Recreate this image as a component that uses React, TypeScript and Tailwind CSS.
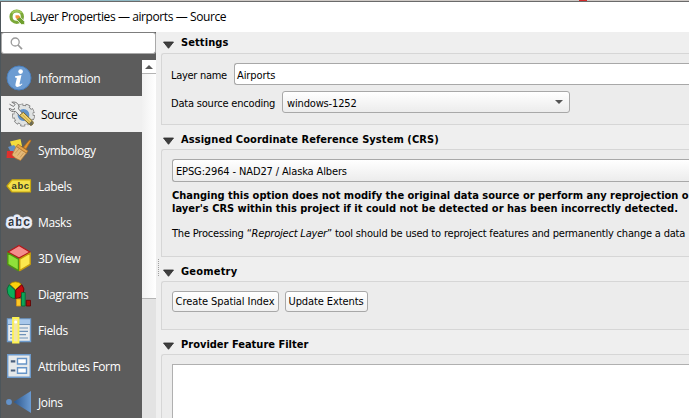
import type { ReactNode } from 'react';

const ui = "font-['DejaVu_Sans_Condensed','DejaVu_Sans',sans-serif] [font-stretch:condensed] text-[11px]";
const segoe = "font-['Open_Sans','Noto_Sans',sans-serif] [font-stretch:normal]";

function QgisLogo() {
  return (
    <svg width="16" height="16" viewBox="0 0 16 16" className="shrink-0">
      <circle cx="7.7" cy="7.7" r="5.7" fill="none" stroke="#7ba838" strokeWidth="3.2" />
      <path d="M3 4.2A5.8 5.8 0 0 1 12.4 4" fill="none" stroke="#a3c95a" strokeWidth="2" />
      <path d="M7.6 7.4h3L15.6 12.6V15.5H12.4L7.6 10.6Z" fill="#6f9f2e" stroke="#fff" strokeWidth=".7" />
      <path d="M6.5 6.3h3.2l1.6 1.7-3 2.2-1.8-1.6Z" fill="#f0943e" />
    </svg>
  );
}

function InfoIcon() {
  return (
    <svg width="26" height="26" viewBox="0 0 26 26">
      <circle cx="13" cy="13" r="12" fill="#6c9cd2" stroke="#4a7fbd" strokeWidth="1" />
      <circle cx="14.600" cy="6.600" r="2.300" fill="#fff" />
      <path d="M9 11.200 15.500 10.100 13.600 18.400q-.2 1.200.6 1 .8-.2 1.600-1l.7.6q-2.300 2.900-4.900 2.900-2.700-.1-2.100-2.900l1.300-5.800q.1-.8-1.800-.8Z" fill="#fff" />
    </svg>
  );
}

function SourceIcon() {
  return (
    <svg width="28" height="26" viewBox="0 0 28 26">
      <circle cx="16.500" cy="14" r="9.400" fill="none" stroke="#777" strokeWidth="4" strokeDasharray="4.400 2.160" />
      <circle cx="16.500" cy="14" r="8" fill="#5f91c9" stroke="#777" strokeWidth="4" />
      <circle cx="16.500" cy="14" r="7.600" fill="#5f91c9" stroke="#dfe2e2" strokeWidth="3.400" />
      <circle cx="16.500" cy="14" r="9.500" fill="none" stroke="#e2e4e4" strokeWidth="2.400" strokeDasharray="3.200 3.430" strokeDashoffset="-.6" />
      <path d="M2.500 3.200 6.500 5.500 8.200 3.200 4.800 1.200Q9.500.3 11.600 4q.8 2-.2 3.800l4.900 5.500-2.700 2.500-5-5.400Q4 11.500 2 7.800L3 7.500l3 1.600 2-1.500" fill="#eceeee" stroke="#777" strokeWidth="1" />
      <path d="M12.600 14.500 16.300 11.300 26 20.600q1 3-2.200 3.800Z" fill="#ecd06c" stroke="#7b6526" strokeWidth="1" />
      <path d="m15.600 13.900 8.500 8.500" stroke="#c9a544" strokeWidth="1" />
      <path d="M25.500 20.400q1.600 3.200-2.200 4.200l-1.200-1.500 2.300-3Z" fill="#6b6a55" />
    </svg>
  );
}

function SymbologyIcon() {
  return (
    <svg width="26" height="22" viewBox="0 0 26 22">
      <path d="M4 2.500 14.500 0 16 7 7 10Z" fill="#f4dc3c" />
      <path d="M2 8 8 6l7 8-8 3Z" fill="#6391c4" />
      <path d="m1 12 6 0 5 7-11.500 0Z" fill="#e02f2c" />
      <path d="m17.500 8.200 5.600-6.800q1.500-1.200 1.800.4l-5 8.300Z" fill="#e5952f" stroke="#b46c1a" strokeWidth=".7" />
      <path d="m12 5.200 10 6.800-1.700 2.200-10.100-6.700Z" fill="#e6a54c" stroke="#a8691d" strokeWidth=".7" />
      <path d="m10.200 7.500 10.100 6.700-5.800 7.300q-5-1.300-8.500-5.500Z" fill="#e3b878" stroke="#b57a30" strokeWidth=".7" />
      <path d="m11.500 16.500 4-5M14 18.500l3.500-4.500M9 14.500l4-4.500" stroke="#c4924e" strokeWidth=".8" />
    </svg>
  );
}

function LabelsIcon() {
  return (
    <svg width="26" height="14" viewBox="0 0 26 14">
      <path d="M1 7 6 .8H24.500V13H6Z" fill="#f4e049" stroke="#c9a70c" strokeWidth="1.200" strokeLinejoin="round" />
      <text x="5.600" y="10.100" fontFamily="Liberation Sans, sans-serif" fontWeight="bold" fontSize="9.500" textLength="17" fill="#333a2a">abc</text>
    </svg>
  );
}

function MasksIcon() {
  return (
    <svg width="28" height="16" viewBox="0 0 28 16">
      <text x="3" y="12.200" fontFamily="Liberation Sans, sans-serif" fontWeight="bold" fontSize="12" textLength="21.500" fill="#30363f" stroke="#e8ecf8" strokeWidth="5" strokeLinejoin="round" paintOrder="stroke">abc</text>
    </svg>
  );
}

function CubeIcon() {
  return (
    <svg width="26" height="28" viewBox="0 0 26 28">
      <path d="M13 1.500 24 8 13 14.200 2 8Z" fill="#f48d8c" stroke="#b5181b" strokeWidth="1.400" strokeLinejoin="round" />
      <path d="M1.800 9 12.500 15.200V26.600L1.800 20.300Z" fill="#8fe13a" stroke="#4f9413" strokeWidth="1.400" strokeLinejoin="round" />
      <path d="M24.200 9 13.700 15.200V26.600L24.200 20.300Z" fill="#fce84e" stroke="#c79d0a" strokeWidth="1.400" strokeLinejoin="round" />
    </svg>
  );
}

function DiagramsIcon() {
  return (
    <svg width="26" height="26" viewBox="0 0 26 26">
      <path d="M9.500 8.500 3.600 3.200A8.400 8.400 0 0 1 15.400 3.200Z" fill="#fbd20c" stroke="#9b7900" strokeWidth=".8" />
      <path d="M9 9.200 3.200 3.700A8.300 8.300 0 0 0 9 17.500Z" fill="#0cae5b" stroke="#056331" strokeWidth=".9" />
      <path d="M9.700 9.200 15.800 3.700A8.300 8.300 0 0 1 9.700 17.500Z" fill="#c60b0e" stroke="#6b0000" strokeWidth=".9" />
      <path d="M10.500 18h4v7h-4Z" fill="#fcc726" stroke="#d99411" strokeWidth=".8" />
      <path d="M15.500 11.500h3.700V25h-3.700Z" fill="#0ca558" stroke="#056331" strokeWidth=".8" />
      <path d="M20.300 19.300h4.200V25h-4.200Z" fill="#a70e0a" stroke="#5f0000" strokeWidth=".8" />
    </svg>
  );
}

function FieldsIcon() {
  return (
    <svg width="26" height="28" viewBox="0 0 26 28">
      <path d="M1.500 3h23v22.500h-23Z" fill="#e9ecee" stroke="#6d9acb" strokeWidth="1.400" />
      <path d="M2 3.500h22v4.500H2Z" fill="#a8c8ec" />
      <path d="M2 8.500h22M4 12h18M4 15.300h18M4 18.600h16M4 22h18" stroke="#6f92b8" strokeWidth="1.200" />
      <path d="M7 2h5.500v24.500H7Z" fill="#f2e6a8" stroke="#fdf251" strokeWidth="1.800" />
      <circle cx="9.700" cy="6" r="1.500" fill="#fff" />
    </svg>
  );
}

function FormIcon() {
  return (
    <svg width="26" height="26" viewBox="0 0 26 26">
      <path d="M1.700 1.700h22.600v22.600H1.700Z" fill="#e6e9ea" stroke="#6d9acb" strokeWidth="1.400" />
      <path d="M11.500 5.500h9v5.500h-9ZM11.500 14.700h9v5.500h-9Z" fill="#fff" stroke="#6795c8" strokeWidth="1.400" />
      <path d="M4.800 8.300h4.500M4.800 17.500h4.500" stroke="#4b607d" strokeWidth="2.200" />
    </svg>
  );
}

function JoinsIcon() {
  return (
    <svg width="26" height="24" viewBox="0 0 26 24">
      <defs>
        <linearGradient id="join" x1="0" x2="1">
          <stop offset="0" stopColor="#2b568c" />
          <stop offset="1" stopColor="#6b9bd2" />
        </linearGradient>
      </defs>
      <circle cx="3" cy="12" r="2.900" fill="#6392c9" />
      <path d="M7.500 12 25 1V23Z" fill="url(#join)" />
    </svg>
  );
}

const items: { label: string; icon: ReactNode; selected?: boolean }[] = [
  { label: 'Information', icon: <InfoIcon /> },
  { label: 'Source', icon: <SourceIcon />, selected: true },
  { label: 'Symbology', icon: <SymbologyIcon /> },
  { label: 'Labels', icon: <LabelsIcon /> },
  { label: 'Masks', icon: <MasksIcon /> },
  { label: '3D View', icon: <CubeIcon /> },
  { label: 'Diagrams', icon: <DiagramsIcon /> },
  { label: 'Fields', icon: <FieldsIcon /> },
  { label: 'Attributes Form', icon: <FormIcon /> },
  { label: 'Joins', icon: <JoinsIcon /> },
];

function Section({ title, header, tracking = '', body, children }: { title: string; header: string; tracking?: string; body: string; children: ReactNode }) {
  return (
    <section className="flex shrink-0 flex-col">
      <div className={`flex items-center pl-[2px] ${header}`}>
        <svg width="11" height="8" viewBox="0 0 11 8" className="mt-[3px] shrink-0">
          <path d="M.5 1h10L5.500 7.300Z" fill="#3f3f3f" stroke="#2a2a2a" strokeWidth=".8" />
        </svg>
        <h2 className={`ml-[7px] font-bold leading-[14px] ${tracking}`}>{title}</h2>
      </div>
      <div className={`rounded-tl-[3px] border border-r-0 border-[#d6d6d6] bg-[#ececec] ${body}`}>{children}</div>
    </section>
  );
}

export default function App() {
  return (
    <div className={`flex h-[418px] w-[689px] flex-col overflow-hidden bg-[#efefef] text-black ${ui}`}>
      <div className="flex h-px shrink-0">
        <div className="w-[140px] bg-[#8fb9c4]" />
        <div className="w-[439px] bg-[#cfcac6]" />
        <div className="w-2 bg-[#d22a2a]" />
        <div className="flex-1 bg-[#cfcac6]" />
      </div>
      <div className="h-px shrink-0 bg-[#6a6a6a]" />
      <div className="flex min-h-0 flex-1">
        <div className="w-px shrink-0 bg-[#4d565b]" />
        <div className="flex min-w-0 flex-1 flex-col">
          <header className="flex h-[30px] shrink-0 items-center bg-white pl-2">
            <QgisLogo />
            <span className={`ml-[5px] whitespace-nowrap text-[12px] tracking-[-0.41px] ${segoe}`}>Layer Properties — airports — Source</span>
          </header>
          <div className="flex min-h-0 flex-1">
            <aside className="flex w-[155px] shrink-0 flex-col bg-[#5c5c5c]">
              <div className="flex h-[22px] shrink-0 items-center rounded-[3px] border border-[#a9a9a9] border-t-[#7d7d7d] bg-white pl-2">
                <svg width="13" height="13" viewBox="0 0 13 13" fill="none" stroke="#9a9a9a">
                  <circle cx="5.200" cy="5" r="4" strokeWidth="1.300" />
                  <path d="m8 8 4 4.200" strokeWidth="1.700" />
                </svg>
              </div>
              <div className="mt-[6px] flex min-h-0 flex-1">
                <nav className="flex-1 overflow-hidden">
                  {items.map((item) => (
                    <div key={item.label} className={`flex h-9 items-center pl-1 text-[12px] tracking-[-0.38px] ${segoe} ${item.selected ? 'bg-[#f0f0f0] text-black' : 'text-white'}`}>
                      <span className={item.selected ? 'flex w-9 justify-center pr-1' : 'flex w-[33px] justify-center pr-[5px]'}>{item.icon}</span>
                      <span className="whitespace-nowrap pt-px">{item.label}</span>
                    </div>
                  ))}
                </nav>
                <div className="flex w-[14px] flex-col bg-[#e3e3e3]">
                  <div className="flex h-[13px] items-center justify-center bg-white">
                    <svg width="8" height="4" viewBox="0 0 8 4"><path d="M0 4 4 0l4 4Z" fill="#5a5a5a" /></svg>
                  </div>
                  <div className="h-[226px] border-y border-[#b4b4b4] bg-linear-to-r from-[#f1f1f1] to-white" />
                </div>
              </div>
            </aside>
            <div className="w-[5px] shrink-0 pl-[2px] pt-[227px]">
              <div className="h-[17px] w-0 border-l border-dotted border-[#a0a0a0]" />
            </div>
            <main className="flex min-w-0 flex-1 flex-col">
              <Section title="Settings" header="h-[21px] pt-px" body="h-[72px] pl-[9px] pt-[9px]" tracking="tracking-[0.1px]">
                <div className="flex h-[22px] items-center">
                  <span className="w-[57px] pt-[4px] whitespace-nowrap tracking-[-0.3px]">Layer name</span>
                  <div className="ml-[6px] flex h-[22px] flex-1 items-center rounded-l-[3px] border border-r-0 border-[#a8a8a8] bg-white pl-[2px] pt-[4px] tracking-[-0.1px]">Airports</div>
                </div>
                <div className="mt-[6px] flex h-[22px] items-center">
                  <span className="w-[105px] pt-[4px] whitespace-nowrap tracking-[-0.2px]">Data source encoding</span>
                  <div className="ml-[6px] flex h-[22px] w-[288px] items-center justify-between rounded-[3px] border border-[#a8a8a8] bg-linear-to-b from-white to-[#ececec] pl-1 pr-[6px]">
                    <span className="pt-[4px] tracking-[-0.16px]">windows-1252</span>
                    <svg width="8" height="4" viewBox="0 0 8 4"><path d="M0 0h8L4 4Z" fill="#555" /></svg>
                  </div>
                </div>
              </Section>
              <Section title="Assigned Coordinate Reference System (CRS)" header="h-6 pt-[5px]" body="h-[108px] pl-[10px] pt-[9px]" tracking="tracking-[0.07px]">
                <div className="flex h-[23px] items-center rounded-l-[3px] border border-r-0 border-[#a8a8a8] bg-linear-to-b from-white to-[#ececec] pl-[3px] pt-[3px] tracking-[-0.13px]">
                  EPSG:2964 - NAD27 / Alaska Albers
                </div>
                <p className="mt-[7px] whitespace-nowrap font-bold leading-[13px]">
                  Changing this option does not modify the original data source or perform any reprojection o
                  <br />
                  layer's CRS within this project if it could not be detected or has been incorrectly detected.
                </p>
                <p className="mt-[12px] whitespace-nowrap leading-[13px] tracking-[-0.19px]">The Processing “<i>Reproject Layer</i>” tool should be used to reproject features and permanently change a data</p>
              </Section>
              <Section title="Geometry" header="h-6 pt-[5px]" body="h-[49px] pl-[10px] pt-[9px]" tracking="tracking-[0.2px]">
                <div className="flex gap-[6px]">
                  <button className="h-[21px] w-[107px] rounded-[3px] border border-[#a8a8a8] bg-linear-to-b from-white to-[#f0f0f0] pt-px pr-px tracking-[-0.08px]">Create Spatial Index</button>
                  <button className="h-[21px] w-[83px] rounded-[3px] border border-[#a8a8a8] bg-linear-to-b from-white to-[#f0f0f0] pt-px pr-px tracking-[-0.1px]">Update Extents</button>
                </div>
              </Section>
              <Section title="Provider Feature Filter" header="h-6 pt-[5px]" body="h-[90px] pl-[10px] pt-[9px]">
                <div className="h-[80px] border border-r-0 border-[#b0b0b0] bg-white" />
              </Section>
            </main>
          </div>
        </div>
      </div>
    </div>
  );
}
